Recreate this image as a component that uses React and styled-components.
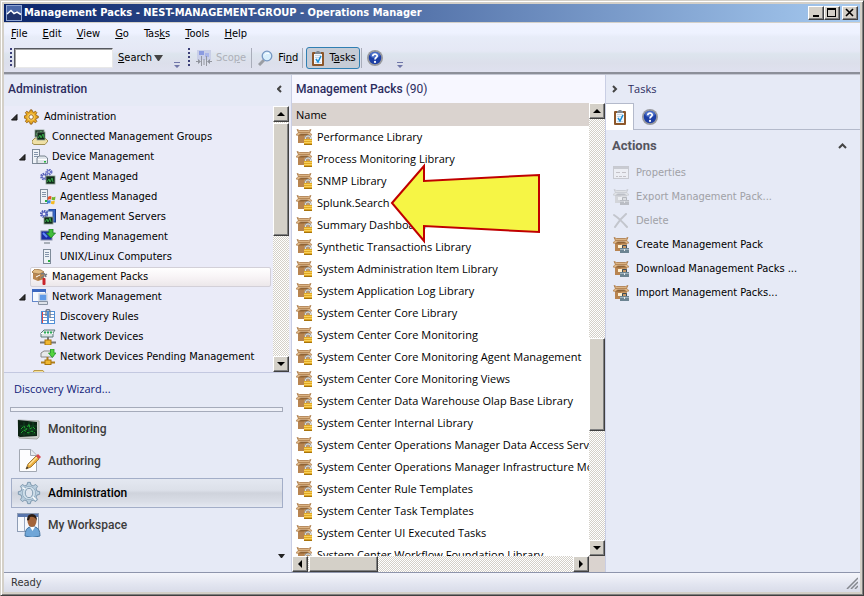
import React from "react";
import styled, { createGlobalStyle, css } from "styled-components";

const UI = `"DejaVu Sans Condensed", "DejaVu Sans", sans-serif`;
const LIST = `"Open Sans", "Noto Sans", sans-serif`;
const HEAD = `Roboto, "Noto Sans", sans-serif`;

const GlobalStyle = createGlobalStyle`
  * { box-sizing: border-box; }
  body { margin: 0; font: 11px/16px ${UI}; color: #000; background: #d4d0c8; }
  button, input { font: inherit; color: inherit; margin: 0; border-radius: 0; }
  ul { list-style: none; margin: 0; padding: 0; }
  svg { display: block; flex: none; }
`;

/* ---------- window frame ---------- */

const Window = styled.div`
  height: 100vh;
  display: flex;
  flex-direction: column;
  padding: 3px;
  background: #d4d0c8;
  border: 1px solid;
  border-color: #d4d0c8 #404040 #404040 #d4d0c8;
  box-shadow: inset 1px 1px #fff, inset -1px -1px #808080;
`;

const TitleBar = styled.header`
  display: flex;
  align-items: center;
  gap: 2px;
  height: 18px;
  flex: none;
  padding: 0 2px;
  background: linear-gradient(90deg, #0a246a, #a6caf0);
  color: #fff;
`;

const Title = styled.h1`
  flex: 1;
  margin: 0;
  font: bold 11px/18px ${UI};
  white-space: nowrap;
`;

const CaptionButtons = styled.div`
  display: flex;
`;

const raised = css`
  background: #d4d0c8;
  border: 1px solid;
  border-color: #fff #404040 #404040 #fff;
  box-shadow: inset -1px -1px #808080;
`;

const CaptionButton = styled.button`
  ${raised}
  width: 16px;
  height: 14px;
  padding: 0;
  display: grid;
  place-items: center;
  &:last-child { margin-left: 2px; }
`;

const Chrome = styled.div`
  flex: none;
  margin-top: 1px;
  border-bottom: 2px solid #8c8f99;
  background: linear-gradient(#f0f3ff 0, #eef2ff 10px, #e7ecf8 14px, #e5e8f5 28px, #dde5ee 31px, #dcdfeb 40px, #dfe1ef 49px);
`;

const MenuBar = styled.nav`
  display: flex;
  padding: 2px 0 0 0;
`;

const MenuItem = styled.button`
  border: 0;
  background: none;
  padding: 0 8px 0 7px;
  font: 11px/18px ${UI};
`;

const ToolStrip = styled.div`
  display: flex;
  align-items: center;
  height: 29px;
  padding: 0 6px;
`;

const Grip = styled.span`
  width: 2px;
  height: 20px;
  margin: 0 2px 0 0;
  background: repeating-linear-gradient(#3b3f78 0 2px, transparent 2px 4px);
`;

const SearchBox = styled.input`
  width: 99px;
  height: 20px;
  padding: 0 4px;
  background: #fff;
  border: 1px solid;
  border-color: #55585f #e8e8e8 #e8e8e8 #55585f;
  box-shadow: inset 1px 1px #a5a5a5;
`;

const ToolButton = styled.button`
  display: flex;
  align-items: center;
  gap: ${(p) => p.$gap || 4}px;
  height: 22px;
  padding: 0 ${(p) => p.$pad || 3}px;
  border: 1px solid ${(p) => (p.$on ? "#2f7fb3" : "transparent")};
  border-radius: 3px;
  background: ${(p) => (p.$on ? "#c6ccd6" : "none")};
  &:disabled { color: #adb0b8; }
`;

const Divider = styled.span`
  width: 1px;
  height: 20px;
  margin: 0 3px 0 1px;
  background: #a9adba;
`;

const Overflow = styled.span`
  align-self: flex-end;
  padding-bottom: 4px;
  margin: 0 8px 0 ${(p) => p.$before}px;
`;

/* ---------- three panes ---------- */

const Panes = styled.main`
  flex: 1;
  min-height: 0;
  display: grid;
  grid-template-columns: 287px minmax(0, 1fr) 255px;
  border-top: 1px solid #c3c6d2;
`;

const Pane = styled.section`
  display: flex;
  flex-direction: column;
  min-height: 0;
  min-width: 0;
  background: #e6eaf6;
`;

const MiddlePane = styled(Pane)`
  background: #fff;
  border-left: 1px solid #c9cee4;
`;

const TaskPane = styled(Pane)`
  border-left: 1px solid #c9cee4;
`;

const PaneHead = styled.div`
  flex: none;
  display: flex;
  align-items: center;
  gap: ${(p) => p.$gap || 0}px;
  height: 28px;
  padding: 0 9px 0 ${(p) => p.$left || 4}px;
  background: ${(p) => (p.$light ? "#f7f7ff" : "none")};
  color: #2c2c5e;
`;

const PaneTitle = styled.h2`
  flex: 1;
  margin: 0;
  font: ${(p) => (p.$light ? `11px/28px ${LIST}` : `500 12px/28px ${HEAD}`)};
  span { font-weight: 400; }
`;

const IconButton = styled.button`
  border: 0;
  padding: 0;
  background: none;
`;

/* ---------- classic scroll bars ---------- */

const Bar = styled.div`
  display: flex;
  flex: none;
  flex-direction: ${(p) => (p.$row ? "row" : "column")};
  ${(p) => (p.$row ? "height: 16px;" : "width: 16px;")}
  background: repeating-conic-gradient(#d4d0c8 0 25%, #fff 0 50%) 0 0 / 2px 2px;
`;

const BarButton = styled.button`
  ${raised}
  flex: none;
  width: 16px;
  height: 16px;
  padding: 0;
  display: grid;
  place-items: center;
`;

const Track = styled.div`
  flex: 1;
  min-height: 0;
  display: flex;
  flex-direction: ${(p) => (p.$row ? "row" : "column")};
`;

const Space = styled.span`
  flex: ${(p) => p.$grow} 1 0;
`;

const Thumb = styled.span`
  ${raised}
  flex: ${(p) => p.$grow} 1 0;
`;

/* ---------- navigation pane ---------- */

const TreeArea = styled.div`
  flex: 1;
  min-height: 0;
  display: flex;
  margin-top: 3px;
  padding-right: 2px;
  border-bottom: 1px solid #c3c8e0;
  background: #eaebf8;
`;

const Tree = styled.ul`
  flex: 1;
  min-width: 0;
  padding-top: 1px;
  overflow: hidden;
`;

const TreeRow = styled.li`
  display: flex;
  height: 20px;
  padding: 0 2px 0 ${(p) => 5 + p.$level * 8}px;
`;

const Twisty = styled.button`
  width: 13px;
  flex: none;
  border: 0;
  padding: 0 0 0 2px;
  background: none;
`;

const TreeItem = styled.button`
  flex: 1;
  min-width: 0;
  display: flex;
  align-items: center;
  gap: 4px;
  padding: 0 1px;
  text-align: left;
  white-space: nowrap;
  border: 1px solid ${(p) => (p.$on ? "#d3d0d8" : "transparent")};
  border-radius: 2px;
  background: ${(p) => (p.$on ? "linear-gradient(#fff, #f8f4f6 50%, #ece7ea)" : "none")};
`;

const Wizard = styled.a`
  flex: none;
  padding: 8px 10px 10px;
  font: 11px/16px ${LIST};
  color: #101a78;
  text-decoration: none;
`;

const Splitter = styled.div`
  flex: none;
  height: 5px;
  margin: 0 8px 0 6px;
  border: 1px solid #a5abba;
  background: #eff1f8;
`;

const Spaces = styled.div`
  flex: none;
  display: flex;
  flex-direction: column;
  gap: 2px;
  padding: 2px 8px 0 7px;
`;

const SpaceButton = styled.button`
  display: flex;
  align-items: center;
  gap: 7px;
  height: 30px;
  padding: 0 5px;
  font: 500 12px/28px ${HEAD};
  color: ${(p) => (p.$on ? "#000" : "#3c3c3c")};
  border: 1px solid ${(p) => (p.$on ? "#a3aec8" : "transparent")};
  background: ${(p) => (p.$on ? "linear-gradient(#e4e8f1 0, #dce0e9 40%, #cfd3dc 50%, #d9dde6 80%, #e4e8f1)" : "none")};
`;

const NavFoot = styled.div`
  flex: none;
  display: flex;
  justify-content: flex-end;
  align-items: flex-end;
  height: 32px;
  padding: 0 6px 14px;
`;

/* ---------- management pack table ---------- */

const ListArea = styled.div`
  flex: 1;
  min-height: 0;
  display: grid;
  grid-template-columns: minmax(0, 1fr) 16px;
  grid-template-rows: minmax(0, 1fr) 16px;
  background: #dad3cf;
`;

const TableBox = styled.div`
  overflow: hidden;
  background: #fff;
`;

const Table = styled.table`
  width: 100%;
  table-layout: fixed;
  border-collapse: collapse;
  font: 11px/22px ${LIST};
`;

const HeadCell = styled.th`
  height: 23px;
  padding: 0 4px;
  text-align: left;
  font-weight: 400;
  background: #dad3cf;
`;

const Cell = styled.td`
  height: 22px;
  padding: 0 0 0 4px;
  overflow: hidden;
  white-space: nowrap;
`;

const PackName = styled.div`
  display: flex;
  align-items: center;
  gap: 5px;
`;

const Callout = styled.svg`
  position: absolute;
  left: 390px;
  top: 162px;
`;

/* ---------- tasks pane ---------- */

const Tabs = styled.div`
  flex: none;
  display: flex;
  height: 27px;
  border-bottom: 1px solid #b4bacb;
`;

const Tab = styled.button`
  width: ${(p) => (p.$on ? 28 : 32)}px;
  height: 27px;
  padding: 0;
  display: grid;
  place-items: center;
  border: 0;
  ${(p) => p.$on && "background: #fff; border-top: 1px solid #b4bacb; border-right: 1px solid #b4bacb;"}
`;

const GhostTab = styled(Tab)`
  background: none;
`;

const GroupHead = styled.div`
  display: flex;
  align-items: center;
  height: 31px;
  padding: 0 13px 0 6px;
`;

const GroupTitle = styled.h3`
  flex: 1;
  margin: 0;
  font: bold 13px/28px ${HEAD};
  color: #55555e;
`;

const TaskItem = styled.button`
  display: flex;
  align-items: center;
  gap: 7px;
  width: 100%;
  height: 24px;
  padding: 0 7px;
  border: 0;
  background: none;
  text-align: left;
  white-space: nowrap;
  &:disabled { color: #a0a1a6; }
`;

const StatusBar = styled.footer`
  flex: none;
  height: 20px;
  padding: 0 2px 0 7px;
  display: flex;
  align-items: center;
  justify-content: space-between;
  border-top: 1px solid #8e95ac;
  background: linear-gradient(#f4f5fb, #e2e5f0 60%, #d9dce9);
  color: #333;
`;

/* ---------- icons ---------- */

const Svg = ({ s = 16, children, w, h, box }) => (
  <svg width={w || s} height={h || s} viewBox={box || "0 0 16 16"} aria-hidden="true">{children}</svg>
);

const Arrow = ({ dir }) => {
  const d = { up: "M4 0L8 4H0z", down: "M0 0H8L4 4z", left: "M4 0V8L0 4z", right: "M0 0V8L4 4z" }[dir];
  const tall = dir === "left" || dir === "right";
  return <Svg w={tall ? 4 : 8} h={tall ? 8 : 4} box={tall ? "0 0 4 8" : "0 0 8 4"}><path d={d} /></Svg>;
};

const Chevron = ({ d, w = 6, h = 8 }) => (
  <Svg w={w} h={h} box={`0 0 ${w} ${h}`}><path d={d} fill="none" stroke="#444" strokeWidth="2" /></Svg>
);

const OverflowMark = () => (
  <Svg w={6} h={6} box="0 0 6 6"><path d="M0 0H6V1H0zM0 3H6L3 6z" fill="#7076a8" /></Svg>
);

const AppIcon = () => (
  <Svg>
    <rect width="16" height="16" fill="#8ea4d2" />
    <rect x="1" y="1" width="14" height="14" fill="#4a67a8" />
    <path d="M1 9L5 5L8 8L10 6L15 9V15H1z" fill="#20336b" />
    <path d="M1 9L5 5.500L8 8.500L11 7L15 9.500" fill="none" stroke="#fff" strokeWidth="1.500" />
  </Svg>
);

const Clipboard = ({ s = 16 }) => (
  <Svg s={s}>
    <rect x="2" y="2" width="12" height="14" rx="1" fill="#8d572a" />
    <rect x="4" y="4" width="8" height="10" fill="#f4f9ff" />
    <path d="M5 5.500h6M5 7.500h6M5 12.500h6" stroke="#c6d6e4" />
    <path d="M5 2H6.500V1H9.500V2H11V4H5z" fill="#7f8790" />
    <path d="M6 9L8 12L11 6" fill="none" stroke="#1c8fd6" strokeWidth="1.600" />
  </Svg>
);

const Help = () => (
  <Svg>
    <circle cx="8" cy="8" r="8" fill="#98999e" />
    <circle cx="8" cy="8" r="6.200" fill="#1d3fa5" />
    <ellipse cx="8" cy="5" rx="4.800" ry="3" fill="#5f84d8" opacity=".7" />
    <path d="M5.800 6.200C5.800 3.300 10.300 3.500 10.200 6C10.100 7.500 8 7.600 8 9.600" fill="none" stroke="#fff" strokeWidth="1.700" />
    <circle cx="8" cy="11.900" r="1.100" fill="#fff" />
  </Svg>
);

const Magnifier = () => (
  <Svg>
    <path d="M1 15L6 10" stroke="#9a9da3" strokeWidth="3" />
    <circle cx="9" cy="6" r="4.800" fill="#d9effc" stroke="#7697c2" strokeWidth="1.300" />
    <path d="M6.500 5Q8 2.500 11 3.500" stroke="#fff" fill="none" />
  </Svg>
);

const Scope = () => (
  <Svg>
    <rect x="1" y="0" width="14" height="10" fill="#c9cfe8" />
    <rect x="3" y="1" width="5" height="4" fill="#8b9be0" /><rect x="9" y="3" width="4" height="4" fill="#a9b5ea" />
    <path d="M5.500 6V16M10.500 6V16M8 9V15" stroke="#94979f" /><path d="M0 11.500H3M13 11.500H16" stroke="#94979f" />
    <path d="M2 9L5 11.500L2 14zM14 9L11 11.500L14 14z" fill="#8e929c" />
  </Svg>
);

const PACK_TAN = { flap: "#dcb484", edge: "#a97846", lip: "#8f6335", left: "#b88450", right: "#c99863" };
const PACK_GREY = { flap: "#dfe1e5", edge: "#c5c8ce", lip: "#bcbfc6", left: "#d3d5da", right: "#dcdee2" };

const Box = ({ grey, children }) => {
  const c = grey ? PACK_GREY : PACK_TAN;
  return (
    <>
      <path d="M2 5H14V14H2z" fill={c.right} />
      <path d="M2 5H8V14H2z" fill={c.left} />
      <path d="M2 5H14V6.500H2z" fill={c.lip} />
      <path d="M1 .5L3.500 1.500H12.500L15 .5L13.500 3.500H2.500z" fill={c.flap} stroke={c.edge} strokeWidth=".8" />
      <path d="M2 3.500L0 6L2.500 6.500L5 4.500H11L13.500 6.500L16 6L14 3.500z" fill={c.flap} stroke={c.edge} strokeWidth=".6" />
      {children}
    </>
  );
};

const LockedPack = () => (
  <Svg>
    <Box>
      <path d="M9.500 10.500V9Q9.500 7 12 7Q14.500 7 14.500 9V10.500" fill="none" stroke="#8d8f90" strokeWidth="2" />
      <path d="M9.500 10.500V9Q9.500 7 12 7Q14.500 7 14.500 9V10.500" fill="none" stroke="#e4e4de" />
      <rect x="8" y="10" width="8" height="6" fill="#e0a822" />
      <path d="M8 11.500H16M8 13.500H16" stroke="#f8cf5a" /><path d="M8 15.500H16" stroke="#a8740c" />
    </Box>
  </Svg>
);

const ToolPack = ({ grey }) => (
  <Svg>
    <Box grey={grey}>
      <rect x="5" y="8" width="4" height="3" fill={grey ? "#eceef2" : "#fff0cf"} />
      <path d="M9.500 11V8.500H13.500V11" fill="none" stroke={grey ? "#b4b7bd" : "#3d4d58"} />
      <rect x="7" y="11" width="9" height="5" fill={grey ? "#babdc4" : "#6c8492"} />
      <path d="M7 12.500H16" stroke={grey ? "#cfd2d8" : "#9fb2bd"} /><rect x="11" y="12" width="1" height="2" fill={grey ? "#e4e6ea" : "#e4eaed"} />
    </Box>
  </Svg>
);

const PropertiesIcon = () => (
  <Svg>
    <rect x=".5" y="1.500" width="15" height="12" fill="#eceef4" stroke="#c7c9d0" />
    <path d="M1 3H15" stroke="#c9cbd2" strokeWidth="2" /><path d="M3 7.500H7M9 7.500H13M3 11.500H5M6 11.500H9M10 11.500H13" stroke="#c4c2c8" />
  </Svg>
);

const DeleteIcon = () => (
  <Svg><path d="M1 2Q7 6 14 14M13 1Q7 6 2 14" fill="none" stroke="#c3c6cd" strokeWidth="2" strokeLinecap="round" /></Svg>
);

const gearPath = "M7 0h2l.5 2 1.600.7L13 1.600 14.400 3l-1.100 1.900.7 1.600 2 .5v2l-2 .5-.7 1.600 1.100 1.900-1.400 1.400-1.900-1.100-1.600.7-.5 2H7l-.5-2-1.600-.7L3 14.400 1.600 13l1.100-1.900L2 9.500 0 9V7l2-.5.7-1.600L1.600 3 3 1.600l1.900 1.100L6.500 2z";

const GoldGear = () => (
  <Svg box="0 -1 18 18">
    <path d={gearPath} fill="#e9aa26" stroke="#8f5a10" /><circle cx="8" cy="8" r="4" fill="#ffd665" />
    <circle cx="8" cy="8" r="2.500" fill="#fff" stroke="#8f5a10" />
  </Svg>
);

const SteelGear = () => (
  <Svg s={24} box="-1 -1 18 18">
    <path d={gearPath} fill="#b9cede" stroke="#7894ab" strokeWidth=".7" /><circle cx="8" cy="8" r="5" fill="#cfdfea" stroke="#8ba5ba" strokeWidth=".6" />
    <ellipse cx="8" cy="8" rx="2.800" ry="3.500" fill="#dfe5ee" stroke="#7c97ad" strokeWidth=".7" />
    <path d="M3 4L5 5M11 11L13 13" stroke="#fff" />
  </Svg>
);

const Scr = ({ x, y, w = 9, h = 7 }) => (
  <g>
    <rect x={x} y={y} width={w} height={h} fill="#122c1c" stroke="#8b9e8f" strokeWidth=".8" />
    <path d={`M${x + 1} ${y + h - 2}l2-3 1 3 2-4 1 4`} fill="none" stroke="#35a845" />
  </g>
);

const Tower = ({ x = 2, h = 14 }) => (
  <g>
    <rect x={x + 0.5} y=".5" width="7" height={h} fill="#eef2f7" stroke="#7f8b9a" />
    <path d={`M${x + 2} 3.500h4M${x + 2} 5.500h4M${x + 2} 7.500h4`} stroke="#8595ab" />
    <rect x={x + 5} y={h - 3} width="2" height="2" fill="#25b13d" />
  </g>
);

const tiny = (x, y, r, c) => (
  <>
    <circle cx={x} cy={y} r={r} fill="none" stroke={c} strokeWidth="2" strokeDasharray="1.500 .8" />
    <circle cx={x} cy={y} r={r - 1} fill="none" stroke={c} />
  </>
);

const TREE_ICONS = {
  gear: <GoldGear />,
  groups: <Svg><path d="M0 12L3 9H13L16 12L13 15.500H2L0 14z" fill="#efe0a6" stroke="#a18f50" /><Scr x={3} y={1} w={9} h={7} /><Scr x={5} y={3} w={8} h={8} /></Svg>,
  device: <Svg><Tower x={0} h={14} /><path d="M5 9L7 7H13L15.500 9V14.500H5z" fill="#dfe4ea" stroke="#78838f" /><path d="M6 10.500H15" stroke="#fff" /><rect x="12" y="12" width="2" height="1.500" fill="#25b13d" /></Svg>,
  agent: <Svg>{tiny(9, 3, 2.5, "#6770c4")}{tiny(4, 7.5, 2.8, "#5660b8")}<Scr x={6} y={7} w={9} h={8} /></Svg>,
  agentless: <Svg><Tower x={0} h={14} /><path d="M8 8Q10 6.500 11.500 7.500L11 10.500Q9.500 10 7.500 11z" fill="#e9532c" /><path d="M12 8Q14 8.500 15.500 7.500L15 11Q13.500 11.500 11.500 10.800z" fill="#74b62e" /><path d="M7.300 11.700Q9 10.700 10.800 11.500L10.300 14.500Q8.500 14 6.800 15z" fill="#3f87dd" /><path d="M11.300 12Q13 12.500 14.800 11.800L14.300 15Q12.500 15.500 10.900 14.800z" fill="#f5ba21" /></Svg>,
  servers: <Svg><rect x="9" y="0" width="6.500" height="13" fill="#3466c8" stroke="#1d3c86" /><rect x="7" y="2" width="6" height="10" fill="#dbe6fa" stroke="#3c5da5" />{tiny(4, 5, 3, "#4a55b5")}<Scr x={4} y={8} w={9} h={7} /></Svg>,
  pending: <Svg><rect x="1" y="2" width="11" height="9" fill="#1b2ca6" stroke="#8790a6" /><path d="M3 4L7 8" stroke="#5f8bf5" strokeWidth="2" /><path d="M4 13H10V15H4z" fill="#a8aeb8" /><path d="M9 0H13V4H15.500L11 9L6.500 4H9z" fill="#42bd3c" stroke="#1c7d22" strokeWidth=".8" /></Svg>,
  unix: <Svg><Tower x={3} h={14} /></Svg>,
  packs: <Svg><path d="M1 4L7 5L12 3V10L6 12L1 10z" fill="#b98650" /><path d="M0 3L3 0L9 1L12 3L7 5L1 4z" fill="#e3bd86" stroke="#8e6132" strokeWidth=".7" /><path d="M7 5V11" stroke="#8e6132" strokeWidth=".7" /><path d="M4 8L8 6" stroke="#fff" /><path d="M9 5Q13 3 14 8M9 9L15 5" fill="none" stroke="#777b80" strokeWidth="1.500" /><rect x="10.500" y="9" width="3" height="7" rx="1" fill="#c9242b" /></Svg>,
  network: <Svg><rect x=".5" y=".5" width="13" height="12" fill="#f7faff" stroke="#6488ca" /><path d="M0 1.500H14" stroke="#3c68c0" strokeWidth="3" /><rect x="7" y="5" width="8" height="7" fill="#5f9ae8" stroke="#d5dae3" strokeWidth="1.500" /><path d="M6.500 12.500H15.500V15.500H6.500z" fill="#dfe3ea" stroke="#8993a3" /></Svg>,
  rules: <Svg><rect x="1" y="2" width="14" height="13" fill="#4f8fd6" /><path d="M2 3H7V14H2zM9 3H14V14H9z" fill="#fff" /><path d="M3 5.500H7M3 8.500H7M3 11.500H7M10 5.500H14M10 8.500H14M10 11.500H14" stroke="#6e95cb" /><path d="M2.500 3V14" stroke="#d8474b" /><path d="M6 7V2Q6 .5 8 .5T10 2V9" fill="none" stroke="#6e7684" strokeWidth="1.300" /></Svg>,
  devices: <Svg><path d="M1 4L4 1H15L13 4V8H1z" fill="#dce3e6" stroke="#5a7b78" /><path d="M1 4.500H13" stroke="#fff" /><path d="M4 3.500H12" stroke="#29ab55" strokeWidth="2" strokeDasharray="2 1" /><path d="M8 8V11M0 13.500H16" stroke="#777" strokeWidth="2" /><rect x="5" y="11" width="6" height="5" fill="#f0b731" stroke="#a8740c" /></Svg>,
  netPending: <Svg><path d="M1 4L4 2H13V8H1z" fill="#e7e9eb" stroke="#888" /><path d="M7.500 8V11M1 13.500H15" stroke="#b07d19" strokeWidth="2" /><rect x="5" y="11" width="6" height="4.500" fill="#f0b731" stroke="#a8740c" /><path d="M10.500 0H14V4H16L12.300 8.500L8.500 4H10.500z" fill="#54d33f" stroke="#209223" strokeWidth=".8" /></Svg>,
  folder: <Svg><path d="M1 4.500L2 1.500H11L13 4.500V14H1z" fill="#f5e09a" stroke="#ba9a48" /></Svg>,
};

const SPACE_ICONS = {
  monitor: <Svg s={24} box="0 0 24 24"><path d="M1 3L22 4V20L20 22L2 21z" fill="#cbcdcb" stroke="#a5a8a6" /><path d="M1 3L20 5V19L3 20L1 19z" fill="#0b2213" /><path d="M3 9H20M3 13H20M3 17H19M7 5V19M12 5V18M16 5V18" stroke="#114521" /><path d="M4 12L7 9L9 13L12 7L13 12L16 10L18 12M4 16L7 13L11 16L15 14L18 16" fill="none" stroke="#20a832" strokeDasharray="3 1" /></Svg>,
  author: <Svg s={24} box="0 0 24 24"><path d="M2.500 .5H14L19.500 6V22.500H2.500z" fill="#fdfdff" stroke="#a2a8b2" /><path d="M13.500 1V6.500H19" fill="#e8ebf0" stroke="#a2a8b2" /><path d="M9 20L11 15L19 7L22 10L14 18z" fill="#eaac3c" stroke="#8c6424" strokeWidth=".8" /><path d="M12 16L20 8" stroke="#ffe19a" strokeWidth="1.500" /><path d="M19 7L21 5L24 8L22 10z" fill="#d8474b" /><path d="M9 20L10 17.500L11.500 19z" fill="#333" /></Svg>,
  gear: <SteelGear />,
  person: <Svg s={24} box="0 0 24 24"><rect x=".5" y=".5" width="21" height="18" fill="#f4f7fc" stroke="#8e9db5" /><path d="M1 2.500H21" stroke="#5976ad" strokeWidth="3" /><path d="M7.500 4V18" stroke="#9aa9c2" /><path d="M8 23Q8 15 13 14H18Q23 15 23 23Q15 26 8 23z" fill="#6fa6d8" stroke="#43739f" /><path d="M13 14L15.500 18L18 14z" fill="#fff" /><ellipse cx="15" cy="8" rx="4.500" ry="6" fill="#a3643a" /><path d="M10 7Q10 1 15 1T20 8Q18 3 13 4Q12 9 10 7z" fill="#2a1c14" /></Svg>,
};

/* ---------- data ---------- */

const MENU = [["", "F", "ile"], ["", "E", "dit"], ["", "V", "iew"], ["", "G", "o"], ["Tas", "k", "s"], ["", "T", "ools"], ["", "H", "elp"]];

const TREE = [
  [0, "gear", "Administration", true],
  [1, "groups", "Connected Management Groups"],
  [1, "device", "Device Management", true],
  [2, "agent", "Agent Managed"],
  [2, "agentless", "Agentless Managed"],
  [2, "servers", "Management Servers"],
  [2, "pending", "Pending Management"],
  [2, "unix", "UNIX/Linux Computers"],
  [1, "packs", "Management Packs"],
  [1, "network", "Network Management", true],
  [2, "rules", "Discovery Rules"],
  [2, "devices", "Network Devices"],
  [2, "netPending", "Network Devices Pending Management"],
  [1, "folder", ""],
];

const SPACES = [["monitor", "Monitoring"], ["author", "Authoring"], ["gear", "Administration"], ["person", "My Workspace"]];

const PACKS = [
  "Performance Library", "Process Monitoring Library", "SNMP Library", "Splunk.Search", "Summary Dashboard",
  "Synthetic Transactions Library", "System Administration Item Library", "System Application Log Library",
  "System Center Core Library", "System Center Core Monitoring", "System Center Core Monitoring Agent Management",
  "System Center Core Monitoring Views", "System Center Data Warehouse Olap Base Library",
  "System Center Internal Library", "System Center Operations Manager Data Access Service",
  "System Center Operations Manager Infrastructure Monitoring", "System Center Rule Templates",
  "System Center Task Templates", "System Center UI Executed Tasks", "System Center Workflow Foundation Library",
];

const TASKS = [
  [<PropertiesIcon />, "Properties", true],
  [<ToolPack grey />, "Export Management Pack...", true],
  [<DeleteIcon />, "Delete", true],
  [<ToolPack />, "Create Management Pack"],
  [<ToolPack />, "Download Management Packs ..."],
  [<ToolPack />, "Import Management Packs..."],
];

const Scrollbar = ({ row, before, thumb, after }) => (
  <Bar $row={row} aria-hidden="true">
    <BarButton tabIndex={-1}><Arrow dir={row ? "left" : "up"} /></BarButton>
    <Track $row={row}>
      <Space $grow={before} /><Thumb $grow={thumb} /><Space $grow={after} />
    </Track>
    <BarButton tabIndex={-1}><Arrow dir={row ? "right" : "down"} /></BarButton>
  </Bar>
);

export default function App() {
  return (
    <>
      <GlobalStyle />
      <Window>
        <TitleBar>
          <AppIcon />
          <Title>Management Packs - NEST-MANAGEMENT-GROUP - Operations Manager</Title>
          <CaptionButtons>
            <CaptionButton aria-label="Minimize"><Svg w={12} h={10} box="0 0 12 10"><path d="M3 7H9V9H3z" /></Svg></CaptionButton>
            <CaptionButton aria-label="Maximize"><Svg w={12} h={10} box="0 0 12 10"><path d="M1 0H10V9H1zM2 2V8H9V2z" fillRule="evenodd" /></Svg></CaptionButton>
            <CaptionButton aria-label="Close"><Svg w={12} h={10} box="0 0 12 10"><path d="M2 1L9 8M9 1L2 8" stroke="#000" strokeWidth="1.600" /></Svg></CaptionButton>
          </CaptionButtons>
        </TitleBar>

        <Chrome>
          <MenuBar>
            {MENU.map(([a, k, b]) => <MenuItem key={k}>{a}<u>{k}</u>{b}</MenuItem>)}
          </MenuBar>
          <ToolStrip>
            <Grip />
            <SearchBox aria-label="Search" />
            <ToolButton $gap={2} $pad={4}><span><u>S</u>earch</span><Svg w={9} h={6} box="0 0 9 6"><path d="M0 0H9L5 6H4z" fill="#444" /></Svg></ToolButton>
            <Overflow $before={6}><OverflowMark /></Overflow>
            <Grip />
            <ToolButton disabled><Scope /><span>Sco<u>p</u>e</span></ToolButton>
            <Divider />
            <ToolButton $pad={2}><Magnifier /><span>Fi<u>n</u>d</span></ToolButton>
            <Divider />
            <ToolButton $on aria-pressed="true" $gap={3}><Clipboard /><span>T<u>a</u>sks</span></ToolButton>
            <Divider />
            <ToolButton $pad={1} aria-label="Help"><Help /></ToolButton>
            <Overflow $before={12}><OverflowMark /></Overflow>
          </ToolStrip>
        </Chrome>

        <Panes>
          <Pane>
            <PaneHead>
              <PaneTitle>Administration</PaneTitle>
              <IconButton aria-label="Collapse navigation"><Chevron w={5} h={8} d="M4 1L1 4L4 7" /></IconButton>
            </PaneHead>
            <TreeArea>
              <Tree>
                {TREE.map(([level, icon, label, open], i) => (
                  <TreeRow key={i} $level={level}>
                    <Twisty aria-label={open ? "Collapse" : undefined} disabled={!open}>
                      {open && <Svg w={7} h={7} box="0 0 7 7"><path d="M6 0.500V6H0.500z" fill="#333" stroke="#111" /></Svg>}
                    </Twisty>
                    <TreeItem $on={icon === "packs"}>{TREE_ICONS[icon]}{label}</TreeItem>
                  </TreeRow>
                ))}
              </Tree>
              <Scrollbar before={1} thumb={112} after={122} />
            </TreeArea>
            <Wizard href="#discovery">Discovery Wizard...</Wizard>
            <Splitter />
            <Spaces>
              {SPACES.map(([icon, label], i) => (
                <SpaceButton key={icon} $on={i === 2}>{SPACE_ICONS[icon]}{label}</SpaceButton>
              ))}
            </Spaces>
            <NavFoot><IconButton aria-label="Configure buttons"><Svg w={7} h={4} box="0 0 7 4"><path d="M0 0H7L4 4H3z" fill="#222" /></Svg></IconButton></NavFoot>
          </Pane>

          <MiddlePane>
            <PaneHead $light>
              <PaneTitle>Management Packs <span>(90)</span></PaneTitle>
            </PaneHead>
            <ListArea>
              <TableBox>
                <Table>
                  <thead><tr><HeadCell scope="col">Name</HeadCell></tr></thead>
                  <tbody>
                    {PACKS.map((name) => (
                      <tr key={name}><Cell><PackName><LockedPack />{name}</PackName></Cell></tr>
                    ))}
                  </tbody>
                </Table>
              </TableBox>
              <Scrollbar before={220} thumb={91} after={110} />
              <Scrollbar row before={1} thumb={68} after={196} />
            </ListArea>
          </MiddlePane>

          <TaskPane>
            <PaneHead $left={6} $gap={10}>
              <IconButton aria-label="Collapse tasks"><Chevron w={6} h={8} d="M1 1L4 4L1 7" /></IconButton>
              <PaneTitle $light>Tasks</PaneTitle>
            </PaneHead>
            <Tabs>
              <Tab $on aria-label="Tasks"><Clipboard /></Tab>
              <GhostTab aria-label="Help"><Help /></GhostTab>
            </Tabs>
            <GroupHead>
              <GroupTitle>Actions</GroupTitle>
              <IconButton aria-label="Collapse actions"><Chevron w={9} h={6} d="M1 5L4.500 1.500L8 5" /></IconButton>
            </GroupHead>
            {TASKS.map(([icon, label, off]) => (
              <TaskItem key={label} disabled={off}>{icon}{label}</TaskItem>
            ))}
          </TaskPane>
        </Panes>

        <StatusBar>
          <span>Ready</span>
          <Svg w={12} h={12} box="0 0 12 12"><path d="M1 12L12 1M5 12L12 5M9 12L12 9" stroke="#85888f" strokeWidth="1.500" /></Svg>
        </StatusBar>
      </Window>
      <Callout width="152" height="84" viewBox="0 0 152 84" aria-hidden="true">
        <path d="M2 41L34 4L34 19L149 13L149 70L34 64V79z" fill="#f6f545" stroke="#c00000" strokeWidth="2" />
      </Callout>
    </>
  );
}
